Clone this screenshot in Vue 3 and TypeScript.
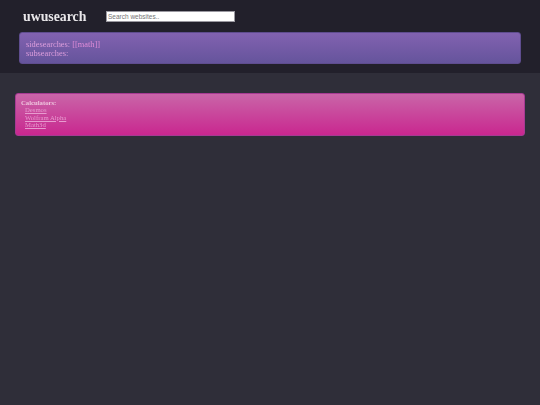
<script setup lang="ts">
const calculators = ['Desmos', 'Wolfram Alpha', 'Math3d'];
</script>

<template>
  <div class="page">
    <header class="top">
      <div class="title-row">
        <h1 class="logo">uwusearch</h1>
        <input class="search" type="text" placeholder="Search websites.." />
      </div>
      <div class="meta">
        <div>sidesearches: <a href="#">[[math]]</a></div>
        <div>subsearches:</div>
      </div>
    </header>
    <main class="content">
      <section class="box">
        <b>Calculators:</b>
        <ul>
          <li v-for="c in calculators" :key="c"><a href="#">{{ c }}</a></li>
        </ul>
      </section>
    </main>
  </div>
</template>

<style>
html, body {
  margin: 0;
  background: #2f2e39;
}
</style>

<style scoped>
.page {
  min-height: 405px;
  background: #2f2e39;
  font-family: "Liberation Serif", "Times New Roman", serif;
  overflow: hidden;
}

.top {
  background: #22202b;
  height: 73px;
  padding: 0 19px;
  box-sizing: border-box;
}

.title-row {
  display: flex;
  align-items: center;
  height: 32px;
  padding-left: 4px;
}

.logo {
  margin: 0;
  width: 83px;
  font-size: 15.5px;
  line-height: 32px;
  color: #e9e7ea;
  white-space: nowrap;
  filter: blur(0.3px);
  transform: scaleX(0.89);
  transform-origin: left center;
}

.search {
  width: 125px;
  height: 9px;
  padding: 0 1px;
  box-sizing: content-box;
  border: 1px solid #9a98a0;
  background: #fff;
  font: 6.5px "Liberation Sans", Arial, sans-serif;
  outline: none;
  margin-top: 1px;
}

.search::placeholder {
  color: #757575;
}

.meta {
  height: 32px;
  box-sizing: border-box;
  padding: 6.5px 6px;
  width: 502px;
  border-radius: 3px;
  border: 1px solid #5f4d8f;
  background: linear-gradient(#8262b0, #65549c);
  color: #dc9ddc;
  font-size: 9.2px;
  line-height: 9.5px;
}

.meta > div {
  filter: blur(0.3px);
  transform: scaleX(0.91);
  transform-origin: left center;
}

.meta a {
  color: #e08cd8;
  text-decoration: none;
}

.content {
  padding: 20px 15px;
}

.box {
  height: 43px;
  box-sizing: border-box;
  padding: 5px 5px;
  border-radius: 3px;
  border: 1px solid #a73a93;
  background: linear-gradient(#c965a8, #c9278f);
  color: #efc4de;
  font-size: 6.7px;
  line-height: 7.4px;
}

.box b,
.box ul {
  filter: blur(0.3px);
}

.box b {
  display: block;
}

.box ul {
  list-style: none;
  margin: 0;
  padding: 0 0 0 4px;
}

.box a {
  color: #e79bcf;
}
</style>
